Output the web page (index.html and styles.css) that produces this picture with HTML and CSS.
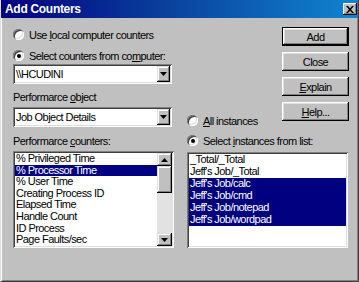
FILE: index.html
```html
<!DOCTYPE html>
<html>
<head>
<meta charset="utf-8">
<link rel="stylesheet" href="styles.css">
</head>
<body>
<div class="window">
  <div class="titlebar">
    <span class="title">Add Counters</span>
    <span class="close-btn"><svg width="8" height="7" viewBox="0 0 8 7"><path d="M0 0h2l2 2.2L6 0h2L5 3.5 8 7H6L4 4.8 2 7H0l3-3.5z" fill="#000"/></svg></span>
  </div>
  <div class="content">
    <div class="left">
      <div class="radio-row first"><span class="radio"></span><span>Use <u>l</u>ocal computer counters</span></div>
      <div class="radio-row second"><span class="radio checked"></span><span>Select counters from co<u>m</u>puter:</span></div>
      <div class="combo combo-computer">
        <span class="combo-text">\\HCUDINI</span>
        <span class="drop"><svg width="7" height="4" viewBox="0 0 7 4"><path d="M0 0h7L3.5 4z" fill="#000"/></svg></span>
      </div>
      <div class="label label-object">Performarce <u>o</u>bject</div>
      <div class="combo combo-object">
        <span class="combo-text">Job Object Details</span>
        <span class="drop"><svg width="7" height="4" viewBox="0 0 7 4"><path d="M0 0h7L3.5 4z" fill="#000"/></svg></span>
      </div>
      <div class="label label-counters">Performarce <u>c</u>ounters:</div>
      <div class="listbox counters-list">
        <div class="items">
          <div class="item">% Privileged Time</div>
          <div class="item sel">% Processor Time</div>
          <div class="item">% User Time</div>
          <div class="item">Creating Process ID</div>
          <div class="item">Elapsed Time</div>
          <div class="item">Handle Count</div>
          <div class="item">ID Process</div>
          <div class="item">Page Faults/sec</div>
        </div>
        <div class="vscroll">
          <span class="sbtn"><svg width="7" height="4" viewBox="0 0 7 4"><path d="M0 4h7L3.5 0z" fill="#000"/></svg></span>
          <span class="thumb"></span>
          <span class="track"></span>
          <span class="sbtn"><svg width="7" height="4" viewBox="0 0 7 4"><path d="M0 0h7L3.5 4z" fill="#000"/></svg></span>
        </div>
      </div>
    </div>
    <div class="right">
      <div class="buttons">
        <button class="btn default">Add</button>
        <button class="btn">Close</button>
        <button class="btn"><u>E</u>xplain</button>
        <button class="btn"><u>H</u>elp...</button>
      </div>
      <div class="inst-radios">
        <div class="radio-row"><span class="radio"></span><span><u>A</u>ll instances</span></div>
        <div class="radio-row"><span class="radio checked"></span><span>Select <u>i</u>nstances from list:</span></div>
      </div>
      <div class="listbox instances-list">
        <div class="items">
          <div class="item">_Total/_Total</div>
          <div class="item">Jeff's Job/_Total</div>
          <div class="item sel">Jeff's Job/calc</div>
          <div class="item sel">Jeff's Job/cmd</div>
          <div class="item sel">Jeff's Job/notepad</div>
          <div class="item sel">Jeff's Job/wordpad</div>
        </div>
      </div>
    </div>
  </div>
</div>
</body>
</html>
```

FILE: styles.css
```css
html, body {
  margin: 0;
  padding: 0;
  background: #c0c0c0;
}
body {
  font-family: "Liberation Sans", Arial, sans-serif;
  font-size: 11px;
  letter-spacing: -0.55px;
  color: #000;
}
.window {
  width: 359px;
  height: 282px;
  box-sizing: border-box;
  background: #c0c0c0;
  border-left: 1px solid #dfdfdf;
  border-right: 1px solid #404040;
  border-bottom: 1px solid #404040;
  box-shadow: inset 1px 0 #fff, inset -1px -1px #808080;
  overflow: hidden;
}
.titlebar {
  height: 18px;
  background: linear-gradient(90deg, #000080 0%, #0a3f9c 45%, #1084d0 100%);
  display: flex;
  align-items: center;
  justify-content: space-between;
  padding: 0 1px 0 4px;
}
.title {
  color: #fff;
  font-weight: bold;
  font-size: 12px;
  letter-spacing: -0.3px;
}
.close-btn {
  width: 14px;
  height: 12px;
  background: #c0c0c0;
  box-shadow: inset -1px -1px #000, inset 1px 1px #fff, inset -2px -2px #808080;
  display: flex;
  align-items: center;
  justify-content: center;
}
.content {
  display: flex;
  gap: 13px;
  padding: 9px 0 0 12px;
}
.left {
  width: 161px;
  display: flex;
  flex-direction: column;
  padding-top: 1px;
}
.radio-row {
  height: 13px;
  display: flex;
  align-items: center;
  gap: 5px;
  white-space: nowrap;
}
.radio {
  width: 11px;
  height: 11px;
  flex: none;
  border-radius: 50%;
  background: #fff;
  box-shadow: inset 1px 1px #808080, inset -1px -1px #fff, inset 2px 2px #404040, inset -2px -2px #dfdfdf;
  position: relative;
}
.radio.checked::after {
  content: "";
  position: absolute;
  left: 4px;
  top: 4px;
  width: 4px;
  height: 4px;
  border-radius: 50%;
  background: #000;
}
.radio-row.second { margin-top: 8px; }
.combo {
  height: 20px;
  width: 159px;
  box-sizing: border-box;
  background: #fff;
  box-shadow: inset 1px 1px #808080, inset -1px -1px #fff, inset 2px 2px #404040, inset -2px -2px #dfdfdf;
  display: flex;
  align-items: center;
  justify-content: space-between;
  padding: 2px;
}
.combo-computer { margin-top: 2px; }
.combo-object { margin-top: 3px; }
.combo-text { padding-left: 1px; }
.drop {
  width: 13px;
  height: 16px;
  background: #c0c0c0;
  box-shadow: inset -1px -1px #000, inset 1px 1px #dfdfdf, inset -2px -2px #808080, inset 2px 2px #fff;
  display: flex;
  align-items: center;
  justify-content: center;
}
.label {
  height: 13px;
  line-height: 13px;
}
.label-object { margin-top: 7px; }
.label-counters { margin-top: 8px; }
.listbox {
  background: #fff;
  box-sizing: border-box;
  padding: 2px;
  box-shadow: inset 1px 1px #808080, inset -1px -1px #fff, inset 2px 2px #404040, inset -2px -2px #dfdfdf;
  display: flex;
  overflow: hidden;
}
.counters-list {
  margin-top: 3px;
  height: 97px;
  width: 161px;
}
.items {
  flex: 1;
  overflow: hidden;
}
.item {
  height: 12px;
  line-height: 10px;
  padding-left: 1px;
  white-space: nowrap;
}
.counters-list .item {
  height: 11.6px;
}
.item.sel {
  background: #000080;
  color: #fff;
}
.vscroll {
  width: 15px;
  display: flex;
  flex-direction: column;
  flex: none;
}
.sbtn {
  height: 13px;
  flex: none;
  background: #c0c0c0;
  box-shadow: inset -1px -1px #000, inset 1px 1px #dfdfdf, inset -2px -2px #808080, inset 2px 2px #fff;
  display: flex;
  align-items: center;
  justify-content: center;
}
.thumb {
  height: 27px;
  flex: none;
  background: #c0c0c0;
  box-shadow: inset -1px -1px #000, inset 1px 1px #dfdfdf, inset -2px -2px #808080, inset 2px 2px #fff;
}
.track {
  flex: 1;
  background: #e2e2e2;
}
.right {
  width: 162px;
  display: grid;
  grid-template-columns: 95px 67px;
  grid-template-rows: 120px auto;
  row-gap: 5px;
}
.buttons {
  grid-column: 2;
  grid-row: 1;
  display: flex;
  flex-direction: column;
  gap: 6px;
}
.btn {
  width: 67px;
  height: 19px;
  padding: 0;
  border: none;
  background: #c0c0c0;
  font: inherit;
  letter-spacing: inherit;
  color: #000;
  box-shadow: inset -1px -1px #000, inset 1px 1px #fff, inset -2px -2px #808080, inset 2px 2px #dfdfdf;
}
.btn.default {
  border: 1px solid #000;
}
.inst-radios {
  grid-column: 1;
  grid-row: 1;
  align-self: end;
  display: flex;
  flex-direction: column;
  gap: 7px;
}
.instances-list {
  grid-column: 1 / span 2;
  grid-row: 2;
  width: 161px;
  height: 96px;
}
```
